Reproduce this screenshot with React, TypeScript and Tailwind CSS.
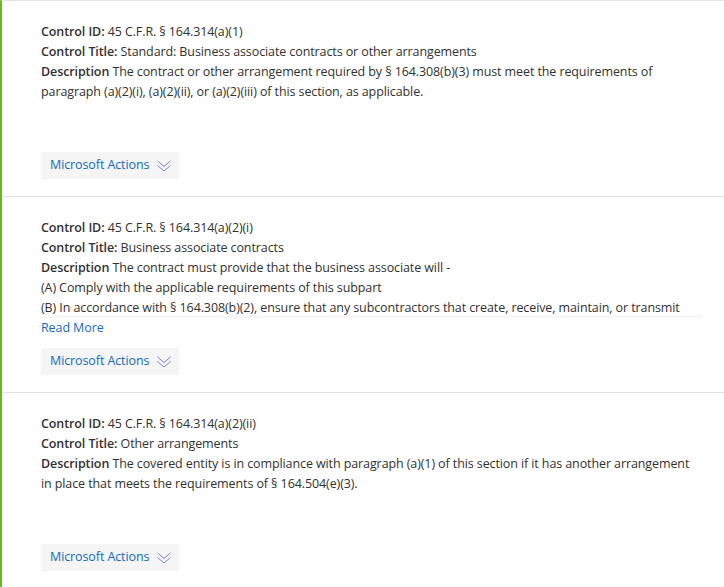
import React from "react";

const font = { fontFamily: '"Open Sans", "Segoe UI", sans-serif' };

function Chevrons() {
  return (
    <svg width="16" height="14" viewBox="0 0 16 14" fill="none" className="ml-[7px]">
      <polyline points="1.5,2 8,7.5 14.5,2" stroke="#7c83d4" strokeWidth="1" />
      <polyline points="1.5,6.5 8,12 14.5,6.5" stroke="#7c83d4" strokeWidth="1" />
    </svg>
  );
}

function ActionsButton() {
  return (
    <div className="mt-[10px] flex">
      <button className="flex h-[27px] items-center bg-[#f5f5f6] pl-[9px] pr-[7px] text-[12.5px] tracking-[-0.1px] text-[#0f6cbd]">
        Microsoft Actions
        <Chevrons />
      </button>
    </div>
  );
}

function Card({
  id,
  title,
  desc,
  extra,
  readMore,
  last,
}: {
  id: string;
  title: string;
  desc: string;
  extra?: string[];
  readMore?: boolean;
  last?: boolean;
}) {
  return (
    <div className={`pl-[39px] pr-[28px] pt-[21px] pb-[17px] ${last ? "" : "border-b border-[#e3e3e3]"}`}>
      <div className="min-h-[120px] text-[12.5px] leading-[20px] tracking-[-0.1px] text-[#323130]">
        <div>
          <span className="font-semibold">Control ID:</span> {id}
        </div>
        <div>
          <span className="font-semibold">Control Title:</span> {title}
        </div>
        {extra ? (
          <div className="relative mr-[-6px] h-[60px] overflow-hidden">
            <div>
              <span className="font-semibold">Description</span> {desc}
            </div>
            {extra.map((e) => (
              <div key={e} className="whitespace-nowrap">{e}</div>
            ))}
            <div className="absolute bottom-0 left-0 right-0 h-[4px] bg-gradient-to-b from-transparent to-[#f3f3f3]" />
          </div>
        ) : (
          <div>
            <span className="font-semibold">Description</span> {desc}
          </div>
        )}
        {readMore && <div className="text-[#0f6cbd]">Read More</div>}
      </div>
      <ActionsButton />
    </div>
  );
}

export default function App() {
  return (
    <div style={font} className="h-[587px] w-[724px] overflow-hidden bg-white">
      <div className="border-l-2 border-t border-l-[#6bb52a] border-t-[#e6e6e6]">
        <Card
          id="45 C.F.R. § 164.314(a)(1)"
          title="Standard: Business associate contracts or other arrangements"
          desc="The contract or other arrangement required by § 164.308(b)(3) must meet the requirements of paragraph (a)(2)(i), (a)(2)(ii), or (a)(2)(iii) of this section, as applicable."
        />
        <Card
          id="45 C.F.R. § 164.314(a)(2)(i)"
          title="Business associate contracts"
          desc="The contract must provide that the business associate will -"
          extra={[
            "(A) Comply with the applicable requirements of this subpart",
            "(B) In accordance with § 164.308(b)(2), ensure that any subcontractors that create, receive, maintain, or transmit",
          ]}
          readMore
        />
        <Card
          id="45 C.F.R. § 164.314(a)(2)(ii)"
          title="Other arrangements"
          desc="The covered entity is in compliance with paragraph (a)(1) of this section if it has another arrangement in place that meets the requirements of § 164.504(e)(3)."
          last
        />
      </div>
    </div>
  );
}
